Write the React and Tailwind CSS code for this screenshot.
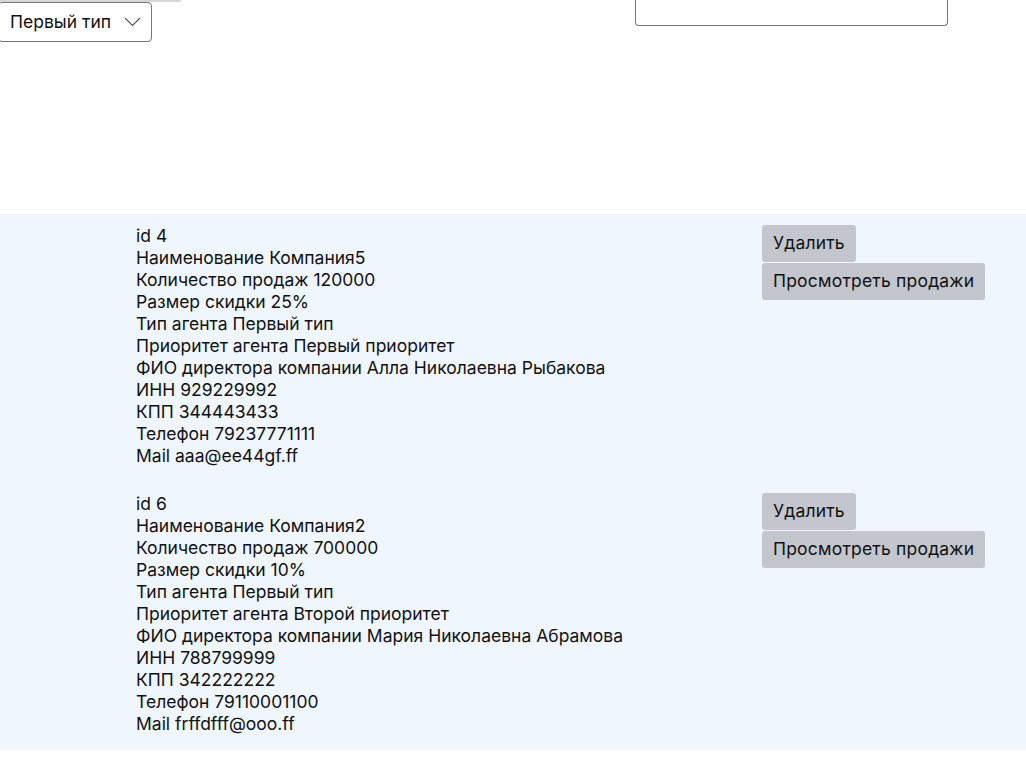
import React from "react";

const agents = [
  {
    id: 4,
    name: "Компания5",
    sales: 120000,
    discount: 25,
    type: "Первый тип",
    priority: "Первый приоритет",
    director: "Алла Николаевна Рыбакова",
    inn: "929229992",
    kpp: "344443433",
    phone: "79237771111",
    mail: "aaa@ee44gf.ff",
  },
  {
    id: 6,
    name: "Компания2",
    sales: 700000,
    discount: 10,
    type: "Первый тип",
    priority: "Второй приоритет",
    director: "Мария Николаевна Абрамова",
    inn: "788799999",
    kpp: "342222222",
    phone: "79110001100",
    mail: "frffdfff@ooo.ff",
  },
];

function AgentCard({ agent }) {
  return (
    <div className="flex pt-[11px] pb-[15px]">
      <div className="ml-[136px] w-[626px] flex flex-col text-[17.5px] leading-[22px] text-[#111]">
        <span>id {agent.id}</span>
        <span>Наименование {agent.name}</span>
        <span>Количество продаж {agent.sales}</span>
        <span>Размер скидки {agent.discount}%</span>
        <span>Тип агента {agent.type}</span>
        <span>Приоритет агента {agent.priority}</span>
        <span>ФИО директора компании {agent.director}</span>
        <span>ИНН {agent.inn}</span>
        <span>КПП {agent.kpp}</span>
        <span>Телефон {agent.phone}</span>
        <span>Mail {agent.mail}</span>
      </div>
      <div className="flex flex-col items-start gap-px">
        <button className="h-[37px] px-[11px] bg-[#c3c6cc] rounded-[3px] text-[17.5px] tracking-[0.2px] text-[#111]">
          Удалить
        </button>
        <button className="h-[37px] px-[11px] bg-[#c3c6cc] rounded-[3px] text-[17.5px] tracking-[0.2px] text-[#111]">
          Просмотреть продажи
        </button>
      </div>
    </div>
  );
}

export default function App() {
  return (
    <div className="min-h-screen bg-white font-['Inter',sans-serif]">
      <div className="h-[214px] flex items-start">
        <div className="flex flex-col">
          <div className="h-[2px] w-[181px] bg-[#d6d6d6]" />
          <div className="-ml-[2px] w-[154px] h-[40px] border border-[#767676] rounded-[4px] flex items-center pl-[11px] gap-[13px] text-[17.5px] text-[#111]">
            <span>Первый тип</span>
            <svg width="17" height="10" viewBox="0 0 17 10" fill="none">
              <path d="M1 1l7.5 7.5L16 1" stroke="#555" strokeWidth="1.1" />
            </svg>
          </div>
        </div>
        <div className="ml-[454px] w-[313px] h-[26px] border border-t-0 border-[#767676] rounded-b-[4px]" />
      </div>
      <div className="bg-[#eff6fe]">
        {agents.map((a) => (
          <AgentCard key={a.id} agent={a} />
        ))}
      </div>
    </div>
  );
}
